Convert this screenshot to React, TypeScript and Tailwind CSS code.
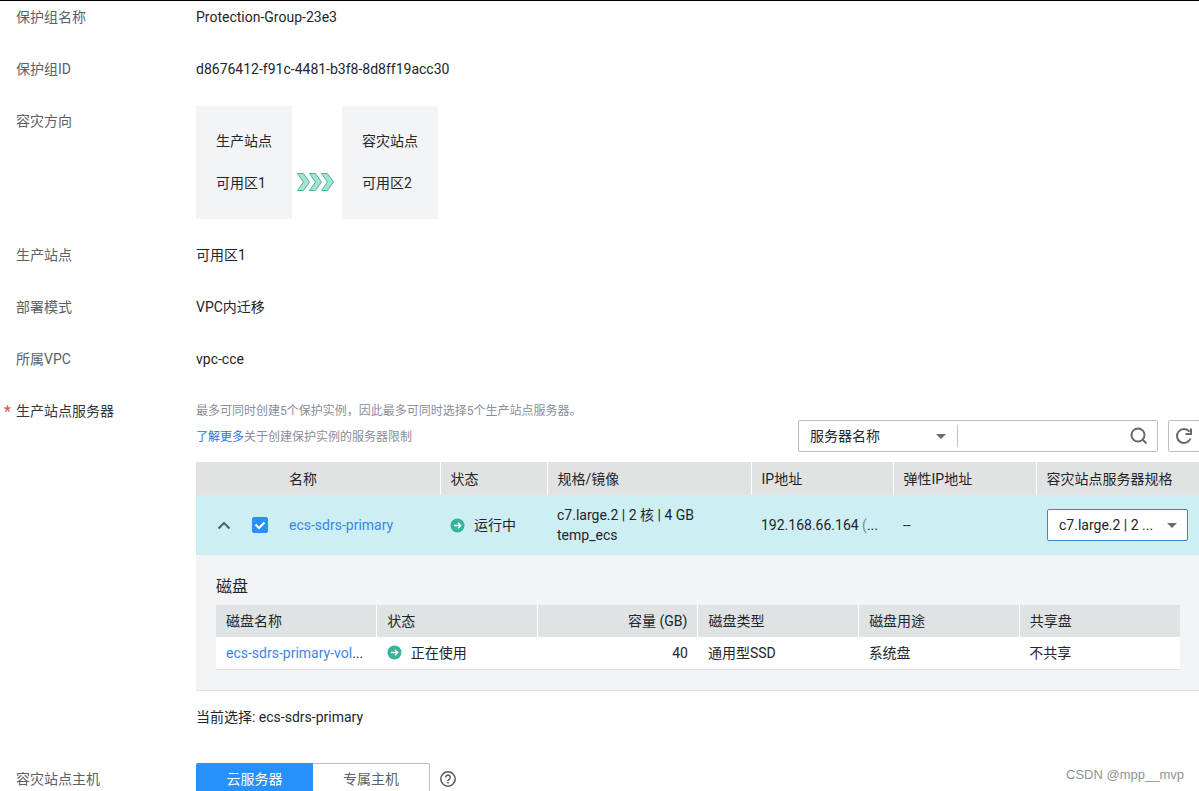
import type { ReactNode } from 'react'

const serverHead = ['状态', '规格/镜像', 'IP地址', '弹性IP地址', '容灾站点服务器规格']

const diskHead = ['磁盘名称', '状态', '容量 (GB)', '磁盘类型', '磁盘用途', '共享盘']

function Field({ label, required, children }: { label: string; required?: boolean; children: ReactNode }) {
  return (
    <div className="flex">
      <div className="w-[196px] shrink-0 flex text-[#5c6068]">
        <span className="w-4 shrink-0 pl-1 pt-px text-base leading-5 text-[#e8503f]">{required && '*'}</span>
        <span className={required ? 'text-[#33363c]' : ''}>{label}</span>
      </div>
      <div className="flex-1 min-w-0">{children}</div>
    </div>
  )
}

function Site({ title, zone }: { title: string; zone: string }) {
  return (
    <div className="w-24 bg-[#f3f4f6] px-5 pt-[25px] pb-[26px] flex flex-col gap-[22px]">
      <span>{title}</span>
      <span>{zone}</span>
    </div>
  )
}

function Arrows() {
  return (
    <svg width="37" height="18" viewBox="0 0 37 18" fill="#a5e3d0" stroke="#45b99c" strokeWidth="1">
      <path d="M.5.5h6l6 8.500-6 8.500h-6l6-8.500z" />
      <path d="M12.500.5h6l6 8.500-6 8.500h-6l6-8.500z" />
      <path d="M24.500.5h6l6 8.500-6 8.500h-6l6-8.500z" />
    </svg>
  )
}

function Caret() {
  return (
    <svg className="pointer-events-none absolute right-[11px] top-1/2 -mt-[2px]" width="10" height="5" viewBox="0 0 10 5" fill="#666a70">
      <path d="M0 0h10L5 5z" />
    </svg>
  )
}

function Status({ text }: { text: string }) {
  return (
    <span className="flex items-center gap-[9px]">
      <svg width="15" height="15" viewBox="0 0 15 15" fill="none">
        <circle cx="7.500" cy="7.500" r="7" fill="#34b498" />
        <path d="M4 7.500h6.500M8 4.800l2.700 2.700L8 10.200" stroke="#fff" strokeWidth="1.400" />
      </svg>
      {text}
    </span>
  )
}

function DiskTable() {
  return (
    <table className="w-full table-fixed text-left">
      <thead>
        <tr className="h-8 bg-[#e0e3e4]">
          {diskHead.map((h, i) => (
            <th
              key={h}
              className={`px-[10px] font-normal ${i === 2 ? 'text-right' : ''} ${
                i < 5 ? 'border-r border-white' : ''
              }`}
            >
              {h}
            </th>
          ))}
        </tr>
      </thead>
      <tbody>
        <tr className="h-8 bg-white border-b border-[#dfe1e6]">
          <td className="px-[10px] whitespace-nowrap">
            <a href="#disk" className="text-[#3b86e8]">ecs-sdrs-primary-vol</a>...
          </td>
          <td className="px-[10px]"><Status text="正在使用" /></td>
          <td className="px-[10px] text-right">40</td>
          <td className="px-[10px]">通用型SSD</td>
          <td className="px-[10px]">系统盘</td>
          <td className="px-[10px]">不共享</td>
        </tr>
      </tbody>
    </table>
  )
}

function ServerTable() {
  return (
    <table className="w-full table-fixed text-left">
      <colgroup>
        <col className="w-[46px]" />
        <col className="w-[36px]" />
        <col className="w-[162px]" />
        <col className="w-[107px]" />
        <col className="w-[204px]" />
        <col className="w-[142px]" />
        <col className="w-[143px]" />
        <col className="w-[164px]" />
      </colgroup>
      <thead>
        <tr className="h-[33px] bg-[#e1e3e3]">
          <td />
          <td />
          <th className="px-[11px] font-normal border-r border-white">名称</th>
          {serverHead.map((h, i) => (
            <th
              key={h}
              className={`px-[10px] font-normal whitespace-nowrap ${i < 4 ? 'border-r border-white' : ''}`}
            >
              {h}
            </th>
          ))}
        </tr>
      </thead>
      <tbody>
        <tr className="h-[60px] bg-[#cdeef2]">
          <td className="pl-[21px]">
            <button type="button" aria-label="收起" className="block">
              <svg width="14" height="14" viewBox="0 0 14 14" fill="none" stroke="#4a5560" strokeWidth="1.800">
                <path d="M1.500 10.500 7 5l5.500 5.500" />
              </svg>
            </button>
          </td>
          <td className="pl-[10px]">
            <label className="relative block size-4">
              <input
                type="checkbox"
                defaultChecked
                aria-label="ecs-sdrs-primary"
                className="peer block size-4 appearance-none rounded-[2px] border border-[#2d8cf0] bg-white checked:bg-[#2790fb]"
              />
              <svg
                className="pointer-events-none absolute inset-0 hidden peer-checked:block"
                viewBox="0 0 16 16"
                fill="none"
                stroke="#fff"
                strokeWidth="2.200"
              >
                <path d="M3.500 7.500 7 11l5.500-5.500" />
              </svg>
            </label>
          </td>
          <td className="px-[11px]">
            <a href="#server" className="text-[#3b86e8]">ecs-sdrs-primary</a>
          </td>
          <td className="px-[10px]"><Status text="运行中" /></td>
          <td className="px-[10px]">
            <div>c7.large.2 | 2 核 | 4 GB</div>
            <div>temp_ecs</div>
          </td>
          <td className="px-[10px] whitespace-nowrap">
            192.168.66.164 <span className="text-[#7d8b92]">(</span>...
          </td>
          <td className="px-[10px]">--</td>
          <td className="pl-[11px] pr-3">
            <div className="relative">
              <select
                aria-label="容灾站点服务器规格"
                className="block w-full h-8 appearance-none rounded-[2px] border border-[#3b86d8] bg-white pl-[11px] pr-6"
              >
                <option>c7.large.2 | 2 ...</option>
              </select>
              <Caret />
            </div>
          </td>
        </tr>
        <tr className="bg-[#f3f4f6] border-b border-[#dfe1e6]">
          <td colSpan={8} className="px-5 pt-[22px] pb-5">
            <h3 className="pb-2 text-base leading-5">磁盘</h3>
            <DiskTable />
          </td>
        </tr>
      </tbody>
    </table>
  )
}

export default function App() {
  return (
    <main className="relative h-screen overflow-hidden border-t border-black bg-white font-['Roboto','Noto_Sans_CJK_SC',sans-serif] text-sm leading-5 text-[#22252b]">
      <form className="-mr-px pt-[6px] flex flex-col gap-8">
        <Field label="保护组名称">Protection-Group-23e3</Field>
        <Field label="保护组ID">d8676412-f91c-4481-b3f8-8d8ff19acc30</Field>
        <Field label="容灾方向">
          <div className="-mt-[5px] -mb-[6px] flex">
            <Site title="生产站点" zone="可用区1" />
            <div className="w-[50px] pl-[5px] pt-[67px]">
              <Arrows />
            </div>
            <Site title="容灾站点" zone="可用区2" />
          </div>
        </Field>
        <Field label="生产站点">可用区1</Field>
        <Field label="部署模式">VPC内迁移</Field>
        <Field label="所属VPC">vpc-cce</Field>

        <Field label="生产站点服务器" required>
          <div className="flex items-end justify-between pb-[10px]">
            <div className="flex flex-col gap-[6px] pb-[5px] text-xs leading-5 text-[#8a8e99]">
              <p>最多可同时创建5个保护实例，因此最多可同时选择5个生产站点服务器。</p>
              <p>
                <a href="#more" className="text-[#2673e5]">了解更多</a>关于创建保护实例的服务器限制
              </p>
            </div>

            {/* Search bar */}
            <div className="flex gap-[10px] shrink-0">
              <div className="w-[360px] h-8 flex items-center border border-[#b9bcc2] rounded-[2px]">
                <div className="relative w-[159px] h-[22px] border-r border-[#b9bcc2]">
                  <select
                    aria-label="搜索条件"
                    className="block w-full h-[22px] appearance-none bg-transparent pl-[11px] pr-8"
                  >
                    <option>服务器名称</option>
                  </select>
                  <Caret />
                </div>
                <input type="text" aria-label="搜索" className="flex-1 min-w-0 h-6 px-2 outline-none" />
                <button type="button" aria-label="搜索" className="mr-[9px]">
                  <svg width="18" height="18" viewBox="0 0 18 18" fill="none" stroke="#666a70" strokeWidth="2">
                    <circle cx="8" cy="8" r="6.500" />
                    <path d="m12.500 12.500 4 4" />
                  </svg>
                </button>
              </div>
              <button
                type="button"
                aria-label="刷新"
                className="size-8 flex items-center justify-center border border-[#b9bcc2] rounded-[2px]"
              >
                <svg width="18" height="18" viewBox="0 0 18 18" fill="none" stroke="#666a70" strokeWidth="2">
                  <path d="M15.500 11.500A7 7 0 1 1 14.500 4.700" />
                  <path d="M16 1.500v5.500h-5.500" />
                </svg>
              </button>
            </div>
          </div>

          <ServerTable />
          <p className="pt-4 pb-[10px]">当前选择: ecs-sdrs-primary</p>
        </Field>

        <Field label="容灾站点主机">
          <div className="-mt-[6px] flex items-center">
            <button type="button" className="w-[117px] h-8 bg-[#2790fb] text-white rounded-l-[2px]">云服务器</button>
            <button
              type="button"
              className="w-[117px] h-8 border border-l-0 border-[#b9bcc2] bg-white text-[#5c6068] rounded-r-[2px]"
            >
              专属主机
            </button>
            <button type="button" aria-label="帮助" className="ml-[10px]">
              <svg width="16" height="16" viewBox="0 0 16 16" fill="none" stroke="#55585e" strokeWidth="1.500">
                <circle cx="8" cy="8" r="7.200" />
                <path d="M5.700 6.500a2.300 2.300 0 1 1 3.500 1.900C8.400 8.900 8 9.200 8 10" />
                <path d="M8 11v1.500" />
              </svg>
            </button>
          </div>
        </Field>
      </form>

      <span className="absolute right-[15px] bottom-[6px] font-['Liberation_Sans',sans-serif] text-[13px] text-[#8f9298]">
        CSDN @mpp__mvp
      </span>
    </main>
  )
}
